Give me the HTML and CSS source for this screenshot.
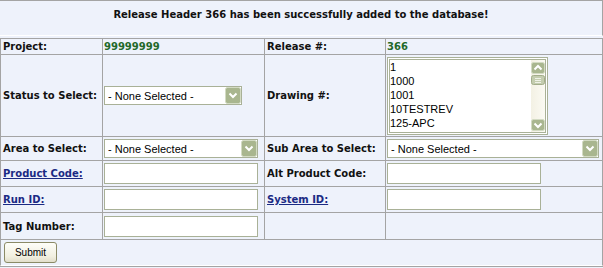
FILE: index.html
```html
<!DOCTYPE html>
<html lang="en">
<head>
    <meta charset="UTF-8">
    <title>Release Header</title>
    <link rel="stylesheet" href="styles.css">
</head>
<body>
    <div class="panel">
        <div class="banner">Release Header 366 has been successfully added to the database!</div>

        <form class="grid" id="release-form">
            <div class="cell label">Project:</div>
            <div class="cell value">99999999</div>
            <div class="cell label">Release #:</div>
            <div class="cell value">366</div>

            <div class="cell label">Status to Select:</div>
            <div class="cell">
                <div class="select select-status">
                    <select id="status"><option>- None Selected -</option></select>
                    <svg class="drop" width="16" height="17" viewBox="0 0 16 17">
                        <rect x="0.5" y="0.5" width="15" height="16" rx="2" fill="#a9b68f" stroke="#d3dbc3"/>
                        <path d="M4.5 6.5 L8 10 L11.5 6.5" fill="none" stroke="#fff" stroke-width="2"/>
                    </svg>
                </div>
            </div>
            <div class="cell label">Drawing #:</div>
            <div class="cell">
                <div class="listbox">
                    <div class="options">
                        <div>1</div>
                        <div>1000</div>
                        <div>1001</div>
                        <div>10TESTREV</div>
                        <div>125-APC</div>
                    </div>
                    <div class="scrollbar">
                        <svg width="14" height="12" viewBox="0 0 14 12">
                            <rect x="0.5" y="0.5" width="13" height="11" rx="2" fill="#a9b68f" stroke="#d3dbc3"/>
                            <path d="M3.5 7.5 L7 4 L10.5 7.5" fill="none" stroke="#fff" stroke-width="2"/>
                        </svg>
                        <svg class="thumb" width="14" height="10" viewBox="0 0 14 10">
                            <rect x="0.5" y="0.5" width="13" height="9" rx="2" fill="#c4cdaf" stroke="#a3ad8b"/>
                            <path d="M4 3.5h6M4 5.5h6M4 7.5h6" stroke="#eef1e6" stroke-width="1"/>
                        </svg>
                        <div class="track"></div>
                        <svg width="14" height="12" viewBox="0 0 14 12">
                            <rect x="0.5" y="0.5" width="13" height="11" rx="2" fill="#a9b68f" stroke="#d3dbc3"/>
                            <path d="M3.5 4.5 L7 8 L10.5 4.5" fill="none" stroke="#fff" stroke-width="2"/>
                        </svg>
                    </div>
                </div>
            </div>

            <div class="cell label">Area to Select:</div>
            <div class="cell">
                <div class="select select-wide">
                    <select id="area"><option>- None Selected -</option></select>
                    <svg class="drop" width="16" height="17" viewBox="0 0 16 17">
                        <rect x="0.5" y="0.5" width="15" height="16" rx="2" fill="#a9b68f" stroke="#d3dbc3"/>
                        <path d="M4.5 6.5 L8 10 L11.5 6.5" fill="none" stroke="#fff" stroke-width="2"/>
                    </svg>
                </div>
            </div>
            <div class="cell label">Sub Area to Select:</div>
            <div class="cell">
                <div class="select select-sub">
                    <select id="sub-area"><option>- None Selected -</option></select>
                    <svg class="drop" width="16" height="17" viewBox="0 0 16 17">
                        <rect x="0.5" y="0.5" width="15" height="16" rx="2" fill="#a9b68f" stroke="#d3dbc3"/>
                        <path d="M4.5 6.5 L8 10 L11.5 6.5" fill="none" stroke="#fff" stroke-width="2"/>
                    </svg>
                </div>
            </div>

            <div class="cell label"><a href="#">Product Code:</a></div>
            <div class="cell"><input type="text" class="text" id="product-code"></div>
            <div class="cell label">Alt Product Code:</div>
            <div class="cell"><input type="text" class="text" id="alt-product-code"></div>

            <div class="cell label"><a href="#">Run ID:</a></div>
            <div class="cell"><input type="text" class="text" id="run-id"></div>
            <div class="cell label"><a href="#">System ID:</a></div>
            <div class="cell"><input type="text" class="text" id="system-id"></div>

            <div class="cell label">Tag Number:</div>
            <div class="cell"><input type="text" class="text" id="tag-number"></div>
            <div class="cell"></div>
            <div class="cell"></div>

            <div class="cell submit-row">
                <button type="submit" class="btn">Submit</button>
            </div>
        </form>
    </div>
</body>
</html>
```

FILE: styles.css
```css
* {
    margin: 0;
    padding: 0;
    box-sizing: border-box;
}

body {
    background-color: #eef2fb;
    color: #111;
    font-family: "DejaVu Sans", Verdana, sans-serif;
    font-size: 10px;
}

.panel {
    width: 603px;
}

.banner {
    height: 36px;
    padding-top: 8px;
    border-top: 1px solid #a4a4a4;
    border-right: 1px solid #a4a4a4;
    border-bottom: 1px solid #fff;
    margin-bottom: 2px;
    text-align: center;
    font-weight: bold;
    line-height: 12px;
}

.grid {
    display: grid;
    grid-template-columns: 103px 162px 121px 217px;
    grid-template-rows: 16px 82px 24px 26px 26px 27px 26px;
    border-top: 1px solid #a4a4a4;
    border-bottom: 1px solid #a4a4a4;
}

.cell {
    display: flex;
    align-items: center;
    padding-left: 1px;
    border-right: 1px solid #a4a4a4;
    border-bottom: 1px solid #a4a4a4;
}

.cell:nth-child(4n+1) {
    border-left: 1px solid #a4a4a4;
}

.label {
    font-weight: bold;
    padding-left: 2px;
}

.label a {
    color: #1b2a84;
}

.value {
    font-weight: bold;
    color: #23692a;
}

.select {
    display: flex;
    height: 19px;
    border: 1px solid #a9b197;
    background: #fff;
}

.select select {
    flex: 1;
    min-width: 0;
    appearance: none;
    border: none;
    outline: none;
    background: transparent;
    padding-left: 3px;
    font-family: "Liberation Sans", Arial, sans-serif;
    font-size: 11px;
    color: #000;
}

.select-status { width: 138px; }
.select-wide { width: 154px; }
.select-sub { width: 212px; }

.listbox {
    display: flex;
    width: 161px;
    height: 78px;
    border: 3px double #a9b197;
    background: #fff;
    font-family: "Liberation Sans", Arial, sans-serif;
    font-size: 11px;
    line-height: 14px;
    color: #000;
}

.options {
    flex: 1;
}

.scrollbar {
    display: flex;
    flex-direction: column;
    width: 14px;
    padding: 2px 0 1px;
    background: linear-gradient(to right, #f3f1e4, #fbfaf3);
}

.scrollbar .thumb {
    margin-top: 1px;
}

.track {
    flex: 1;
}

.text {
    width: 154px;
    height: 21px;
    border: 1px solid #a9b197;
    background: #fff;
    outline: none;
    font-family: "Liberation Sans", Arial, sans-serif;
    font-size: 11px;
}

.submit-row {
    grid-column: 1 / span 4;
    border-bottom-color: #fff;
}

.btn {
    width: 53px;
    height: 21px;
    margin-left: 2px;
    border: 1px solid #8b8a66;
    border-radius: 3px;
    background: linear-gradient(#fefef9, #f1efe0 70%, #e2decb);
    font-family: "Liberation Sans", Arial, sans-serif;
    font-size: 10px;
    color: #000;
    cursor: pointer;
}
```
